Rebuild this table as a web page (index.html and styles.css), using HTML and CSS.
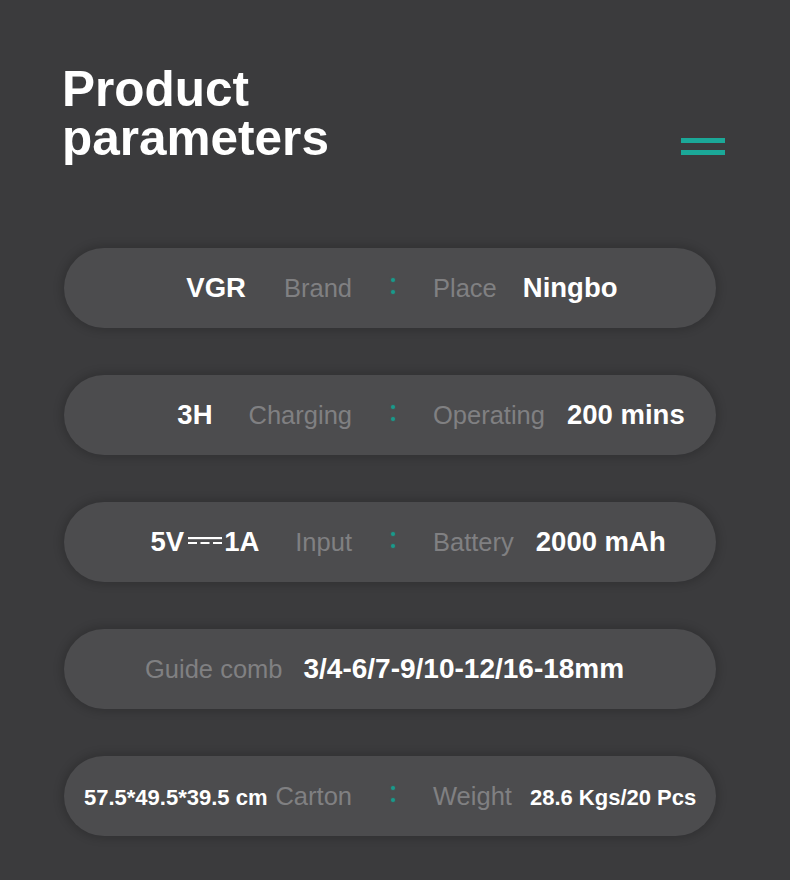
FILE: index.html
```html
<!DOCTYPE html>
<html lang="en">
<head>
<meta charset="utf-8">
<title>Product parameters</title>
<link rel="stylesheet" href="styles.css">
</head>
<body>
<header class="head">
  <h1 class="title">Product<br>parameters</h1>
  <div class="menu"><span></span><span></span></div>
</header>
<section class="list">
  <div class="pill">
    <div class="side left wide"><span class="val">VGR</span><span class="lab">Brand</span></div>
    <div class="colon"><i></i><i></i></div>
    <div class="side right wide"><span class="lab">Place</span><span class="val">Ningbo</span></div>
  </div>
  <div class="pill">
    <div class="side left"><span class="val">3H</span><span class="lab">Charging</span></div>
    <div class="colon"><i></i><i></i></div>
    <div class="side right"><span class="lab">Operating</span><span class="val">200 mins</span></div>
  </div>
  <div class="pill">
    <div class="side left"><span class="val">5V<svg class="dc" width="36" height="12" viewBox="0 0 36 12"><rect x="1" y="2" width="34" height="2.2" fill="#fff"/><rect x="1" y="7" width="9" height="2" fill="#fff"/><rect x="13.5" y="7" width="9" height="2" fill="#fff"/><rect x="26" y="7" width="9" height="2" fill="#fff"/></svg>1A</span><span class="lab">Input</span></div>
    <div class="colon"><i></i><i></i></div>
    <div class="side right"><span class="lab">Battery</span><span class="val">2000 mAh</span></div>
  </div>
  <div class="pill single">
    <span class="lab">Guide comb</span><span class="val big">3/4-6/7-9/10-12/16-18mm</span>
  </div>
  <div class="pill">
    <div class="side left tight"><span class="val sm">57.5*49.5*39.5 cm</span><span class="lab">Carton</span></div>
    <div class="colon"><i></i><i></i></div>
    <div class="side right tight"><span class="lab">Weight</span><span class="val sm">28.6 Kgs/20 Pcs</span></div>
  </div>
</section>
</body>
</html>
```
FILE: styles.css
```css
html, body {
  margin: 0;
  padding: 0;
  background: #3b3b3d;
}
body {
  width: 790px;
  height: 880px;
  overflow: hidden;
  font-family: "Liberation Sans", Arial, sans-serif;
}
.head {
  display: flex;
  justify-content: space-between;
  align-items: flex-end;
  padding: 64px 65px 0 62px;
}
.title {
  margin: 0;
  color: #ffffff;
  font-size: 49.5px;
  line-height: 49px;
  font-weight: 700;
}
.menu {
  display: flex;
  flex-direction: column;
  gap: 7px;
  margin-bottom: 7px;
}
.menu span {
  display: block;
  width: 44px;
  height: 5px;
  background: #1ba898;
}
.list {
  display: flex;
  flex-direction: column;
  gap: 47px;
  margin: 86px 0 0 64px;
  width: 652px;
}
.pill {
  display: grid;
  grid-template-columns: 288px 81px 1fr;
  align-items: center;
  height: 80px;
  border-radius: 40px;
  background: #4c4c4e;
  box-shadow: 0 0 8px 3px rgba(0, 0, 0, 0.16);
}
.side {
  display: flex;
  align-items: baseline;
  white-space: nowrap;
}
.left {
  justify-content: flex-end;
  gap: 36px;
}
.right {
  justify-content: flex-start;
  gap: 22px;
}
.left.wide {
  gap: 38px;
}
.right.wide {
  gap: 26px;
}
.left.tight {
  gap: 8px;
}
.right.tight {
  gap: 18px;
}
.val {
  color: #ffffff;
  font-weight: 700;
  font-size: 27.5px;
}
.val.big {
  font-size: 28px;
}
.val.sm {
  font-size: 22px;
}
.lab {
  color: #808082;
  font-size: 25.5px;
}
.dc {
  vertical-align: 4px;
  margin: 0 1px 0 3px;
}
.colon {
  display: flex;
  flex-direction: column;
  align-items: center;
  gap: 8px;
  margin-top: -4px;
}
.colon i {
  display: block;
  width: 4px;
  height: 4px;
  border-radius: 50%;
  background: #199a8b;
  box-shadow: 0 0 2px rgba(26, 160, 144, 0.5);
}
.pill.single {
  display: flex;
  align-items: baseline;
  justify-content: flex-start;
  gap: 21px;
  padding-left: 81px;
  line-height: 80px;
}
```
